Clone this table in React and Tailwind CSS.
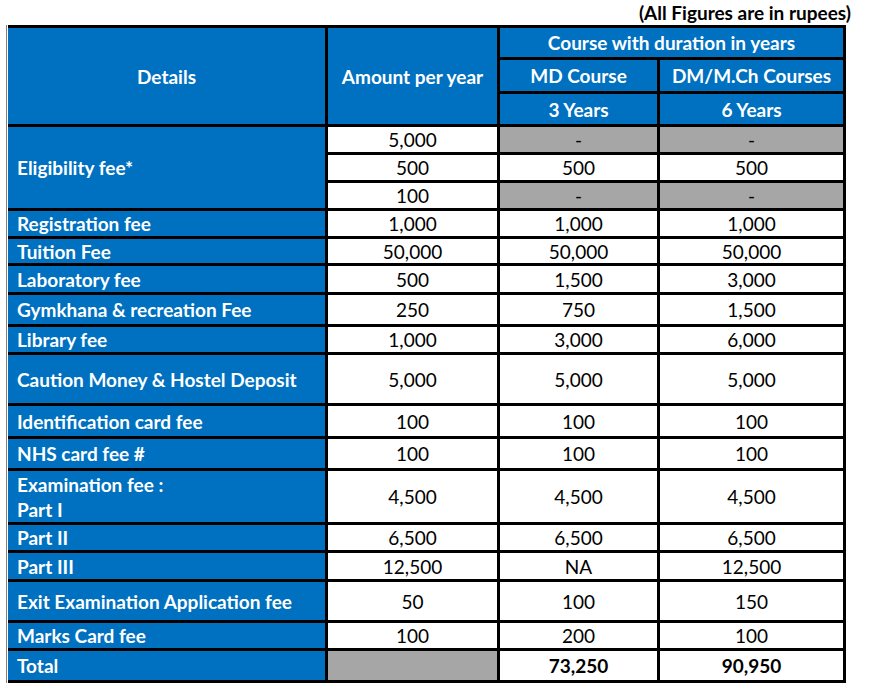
import React from "react";

const blue = "bg-[#0070C0] text-white font-bold";
const gray = "bg-[#A6A6A6]";

function Label({ children, className = "" }) {
  return (
    <div className={`${blue} flex items-center pl-[9px] ${className}`}>{children}</div>
  );
}

function Val({ children, g, b, className = "" }) {
  return (
    <div
      className={`${g ? gray : "bg-white"} ${b ? "font-bold" : ""} flex items-center justify-center text-black ${className}`}
    >
      {children}
    </div>
  );
}

function Head({ children, className = "" }) {
  return (
    <div className={`${blue} flex items-center justify-center ${className}`}>{children}</div>
  );
}

const rows = [
  ["Registration fee", "1,000", "1,000", "1,000"],
  ["Tuition Fee", "50,000", "50,000", "50,000"],
  ["Laboratory fee", "500", "1,500", "3,000"],
  ["Gymkhana & recreation Fee", "250", "750", "1,500"],
  ["Library fee", "1,000", "3,000", "6,000"],
  ["Caution Money & Hostel Deposit", "5,000", "5,000", "5,000"],
  ["Identification card fee", "100", "100", "100"],
  ["NHS card fee #", "100", "100", "100"],
  [
    <div className="leading-[25px]">
      <div>Examination fee :</div>
      <div>Part I</div>
    </div>,
    "4,500",
    "4,500",
    "4,500",
  ],
  ["Part II", "6,500", "6,500", "6,500"],
  ["Part III", "12,500", "NA", "12,500"],
  ["Exit Examination Application fee", "50", "100", "150"],
  ["Marks Card fee", "100", "200", "100"],
];

export default function App() {
  return (
    <div
      className="w-[880px] h-[687px] bg-white text-[19px] leading-none"
      style={{ fontFamily: "Lato, 'Open Sans', sans-serif" }}
    >
      <div className="h-[25px] flex items-center justify-end pr-[29px] font-bold text-black">
        (All Figures are in rupees)
      </div>
      <div className="ml-[6px] w-fit border-l border-[#808080] bg-white pl-[1px]">
        <div className="grid grid-cols-[317px_169px_157px_183px] grid-rows-[29px_31px_30px_25px_25px_25px_25px_24px_26px_29px_25px_48px_30px_29px_51px_25px_26px_38px_25px_29px] gap-[3px] bg-black pt-[3px] pr-[3px] pb-[3px]">
          <Head className="row-span-3">Details</Head>
          <Head className="row-span-3">Amount per year</Head>
          <Head className="col-span-2">Course with duration in years</Head>
          <Head>MD Course</Head>
          <Head>DM/M.Ch Courses</Head>
          <Head>3 Years</Head>
          <Head>6 Years</Head>

          <Label className="row-span-3">Eligibility fee*</Label>
          <Val>5,000</Val>
          <Val g>-</Val>
          <Val g>-</Val>
          <Val>500</Val>
          <Val>500</Val>
          <Val>500</Val>
          <Val>100</Val>
          <Val g>-</Val>
          <Val g>-</Val>

          {rows.map((r, i) => (
            <React.Fragment key={i}>
              <Label>{r[0]}</Label>
              <Val>{r[1]}</Val>
              <Val>{r[2]}</Val>
              <Val>{r[3]}</Val>
            </React.Fragment>
          ))}

          <Label>Total</Label>
          <Val g></Val>
          <Val b>73,250</Val>
          <Val b>90,950</Val>
        </div>
      </div>
    </div>
  );
}
